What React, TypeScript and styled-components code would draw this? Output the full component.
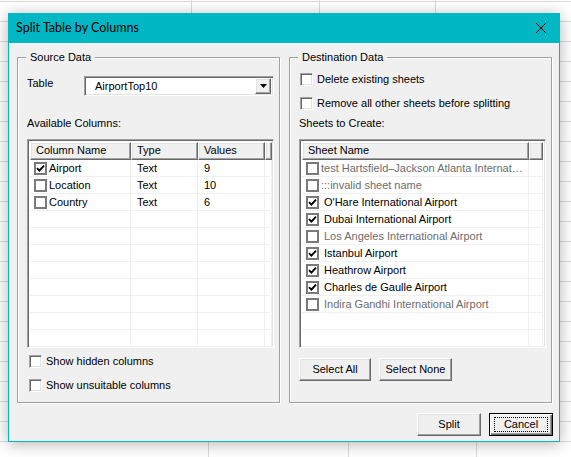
import React from "react";
import styled, { createGlobalStyle, css } from "styled-components";

const Global = createGlobalStyle`
  html, body { margin: 0; padding: 0; }
  body {
    width: 571px; height: 457px; overflow: hidden; background: #fff;
    font-family: "Liberation Sans", Arial, sans-serif; font-size: 11px; color: #000;
  }
  * { box-sizing: border-box; }
`;

const G = "#dadada";
const vline = (x: number, y: number, h: number) =>
  `linear-gradient(${G}, ${G}) ${x}px ${y}px / 1px ${h}px no-repeat`;

const Page = styled.div`
  width: 571px;
  height: 457px;
  padding: 13px 0 0 8px;
  background: ${vline(191, 0, 13)}, ${vline(319, 0, 13)}, ${vline(435, 0, 13)},
    ${vline(208, 441, 16)}, ${vline(348, 441, 16)}, ${vline(476, 441, 16)},
    repeating-linear-gradient(to bottom, ${G} 0 1px, transparent 1px 20px) 0 1px / 100% 100%,
    #fff;
`;

const Window = styled.div`
  width: 552px;
  height: 429px;
  background: #f0f0f0;
  border: 1px solid #00b7c3;
  border-top: none;
  box-shadow: 0 2px 14px rgba(0, 0, 0, 0.3);
  display: flex;
  flex-direction: column;
`;

const TitleBar = styled.div`
  height: 30px;
  margin: 0 -1px;
  background: #00b7c3;
  display: flex;
  align-items: center;
  padding: 0 10px 1px 8px;
  font-family: Lato, "Noto Sans", sans-serif;
  font-size: 12.5px;
  color: #000;
`;

const TitleText = styled.span`
  flex: 1;
`;

const CloseIcon = styled.svg`
  width: 12px;
  height: 12px;
  margin-right: 3px;
`;

const Client = styled.div`
  flex: 1;
  display: flex;
  flex-direction: column;
  padding: 14px 6px 0 8px;
`;

const Groups = styled.div`
  display: flex;
  gap: 9px;
`;

const GroupBox = styled.div`
  position: relative;
  width: 263px;
  height: 346px;
  border: 1px solid #a0a0a0;
  box-shadow: inset 1px 1px 0 #fff, 1px 1px 0 #fff;
  padding: 0 5px 0 9px;
  display: flex;
  flex-direction: column;
`;

const GroupTitle = styled.span`
  position: absolute;
  top: -7px;
  left: 8px;
  padding: 0 4px;
  line-height: 13px;
  background: #f0f0f0;
`;

const FieldRow = styled.div<{ $mt: number }>`
  display: flex;
  align-items: flex-start;
  margin-top: ${(p) => p.$mt}px;
`;

const FieldLabel = styled.span`
  width: 57px;
  line-height: 13px;
  padding-top: 1px;
`;

const sunken = css`
  border: 1px solid;
  border-color: #a0a0a0 #fff #fff #a0a0a0;
  box-shadow: inset 1px 1px 0 #696969, inset -1px -1px 0 #e3e3e3;
  background: #fff;
`;

const raised = css`
  background: #f0f0f0;
  border: 1px solid;
  border-color: #fff #696969 #696969 #fff;
  box-shadow: inset -1px -1px 0 #a0a0a0, inset 1px 1px 0 #e3e3e3;
`;

const Combo = styled.div`
  ${sunken};
  width: 190px;
  height: 20px;
  display: flex;
  align-items: center;
  padding: 2px 2px 2px 10px;
`;

const ComboText = styled.span`
  flex: 1;
  line-height: 13px;
`;

const ComboButton = styled.div`
  ${raised};
  width: 16px;
  height: 16px;
  display: flex;
  align-items: center;
  justify-content: center;
`;

const Caption = styled.div<{ $mt: number }>`
  line-height: 13px;
  margin-top: ${(p) => p.$mt}px;
`;

const ListView = styled.div<{ $mt: number }>`
  ${sunken};
  width: 247px;
  height: 209px;
  margin-top: ${(p) => p.$mt}px;
  padding: 2px;
  overflow: hidden;
`;

const HeaderRow = styled.div<{ $cols: string }>`
  display: grid;
  grid-template-columns: ${(p) => p.$cols};
  height: 18px;
`;

const HeaderCell = styled.div`
  ${raised};
  border-top-color: #fff;
  padding-left: 5px;
  line-height: 15px;
  white-space: nowrap;
  overflow: hidden;
`;

const Row = styled.div<{ $cols: string }>`
  display: grid;
  grid-template-columns: ${(p) => p.$cols};
  height: 17px;
  border-bottom: 1px solid #f0f0f0;
`;

const Cell = styled.div<{ $muted?: boolean }>`
  display: flex;
  align-items: center;
  padding-left: 6px;
  border-right: 1px solid #f0f0f0;
  white-space: nowrap;
  overflow: hidden;
  color: ${(p) => (p.$muted ? "#6d6d6d" : "#000")};
`;

const NameCell = styled(Cell)`
  padding-left: 4px;
`;

const ItemText = styled.span<{ $gap: number }>`
  margin-left: ${(p) => p.$gap}px;
  line-height: 16px;
`;

const ListCheck = styled.span`
  width: 13px;
  height: 13px;
  flex: none;
  border: 2px solid #7a7a7a;
  background: #fff;
  display: flex;
  align-items: center;
  justify-content: center;
`;

const CheckRow = styled.label<{ $mt: number; $ml?: number }>`
  display: flex;
  align-items: center;
  margin-top: ${(p) => p.$mt}px;
  margin-left: ${(p) => p.$ml ?? 0}px;
  height: 13px;
  line-height: 13px;
`;

const FormCheck = styled.span`
  ${sunken};
  width: 13px;
  height: 13px;
  flex: none;
  margin-right: 4px;
`;

const ButtonRow = styled.div<{ $mt: number; $end?: boolean }>`
  display: flex;
  gap: 8px;
  margin-top: ${(p) => p.$mt}px;
  justify-content: ${(p) => (p.$end ? "flex-end" : "flex-start")};
`;

const PushButton = styled.div<{ $w: number; $default?: boolean }>`
  position: relative;
  width: ${(p) => p.$w}px;
  height: 23px;
  display: flex;
  align-items: center;
  justify-content: center;
  padding-bottom: 1px;
  ${(p) =>
    p.$default
      ? css`
          background: #f0f0f0;
          border: 1px solid #000;
          box-shadow: inset 1px 1px 0 #fff, inset -1px -1px 0 #696969,
            inset -2px -2px 0 #a0a0a0;
          &::after {
            content: "";
            position: absolute;
            inset: 3px 4px 3px 4px;
            border: 1px dotted #000;
          }
        `
      : raised}
`;

const Check = () => (
  <svg width="9" height="9" viewBox="0 0 9 9">
    <polyline points="1,4.2 3.4,6.6 8,1.6" fill="none" stroke="#000" strokeWidth="1.9" />
  </svg>
);

const srcCols = "101px 67px 67px 1fr";
const dstCols = "227px 1fr";

const columns = [
  { name: "Airport", type: "Text", values: "9", checked: true },
  { name: "Location", type: "Text", values: "10", checked: false },
  { name: "Country", type: "Text", values: "6", checked: false },
];

const sheets = [
  { name: "test Hartsfield–Jackson Atlanta Internat…", checked: false, muted: true, invalid: true },
  { name: ":::invalid sheet name", checked: false, muted: true, invalid: true },
  { name: "O'Hare International Airport", checked: true },
  { name: "Dubai International Airport", checked: true },
  { name: "Los Angeles International Airport", checked: false, muted: true },
  { name: "Istanbul Airport", checked: true },
  { name: "Heathrow Airport", checked: true },
  { name: "Charles de Gaulle Airport", checked: true },
  { name: "Indira Gandhi International Airport", checked: false, muted: true },
];

export default function App() {
  const srcEmpty = Array.from({ length: 11 - columns.length });
  const dstEmpty = Array.from({ length: 11 - sheets.length });
  return (
    <>
      <Global />
      <Page>
        <Window>
          <TitleBar>
            <TitleText>Split Table by Columns</TitleText>
            <CloseIcon viewBox="0 0 12 12">
              <path d="M1 1 L11 11 M11 1 L1 11" stroke="#000" strokeWidth="1" fill="none" />
            </CloseIcon>
          </TitleBar>
          <Client>
            <Groups>
              <GroupBox>
                <GroupTitle>Source Data</GroupTitle>
                <FieldRow $mt={18}>
                  <FieldLabel>Table</FieldLabel>
                  <Combo>
                    <ComboText>AirportTop10</ComboText>
                    <ComboButton>
                      <svg width="7" height="4" viewBox="0 0 7 4">
                        <polygon points="0,0 7,0 3.5,4" fill="#000" />
                      </svg>
                    </ComboButton>
                  </Combo>
                </FieldRow>
                <Caption $mt={21}>Available Columns:</Caption>
                <ListView $mt={9}>
                  <HeaderRow $cols={srcCols}>
                    <HeaderCell>Column Name</HeaderCell>
                    <HeaderCell>Type</HeaderCell>
                    <HeaderCell>Values</HeaderCell>
                    <HeaderCell />
                  </HeaderRow>
                  {columns.map((c) => (
                    <Row key={c.name} $cols={srcCols}>
                      <NameCell>
                        <ListCheck>{c.checked && <Check />}</ListCheck>
                        <ItemText $gap={2}>{c.name}</ItemText>
                      </NameCell>
                      <Cell>{c.type}</Cell>
                      <Cell>{c.values}</Cell>
                      <Cell />
                    </Row>
                  ))}
                  {srcEmpty.map((_, i) => (
                    <Row key={i} $cols={srcCols}>
                      <Cell />
                      <Cell />
                      <Cell />
                      <Cell />
                    </Row>
                  ))}
                </ListView>
                <CheckRow $mt={7} $ml={2}>
                  <FormCheck />
                  Show hidden columns
                </CheckRow>
                <CheckRow $mt={11} $ml={2}>
                  <FormCheck />
                  Show unsuitable columns
                </CheckRow>
              </GroupBox>

              <GroupBox>
                <GroupTitle>Destination Data</GroupTitle>
                <CheckRow $mt={15} $ml={1}>
                  <FormCheck />
                  Delete existing sheets
                </CheckRow>
                <CheckRow $mt={11} $ml={1}>
                  <FormCheck />
                  Remove all other sheets before splitting
                </CheckRow>
                <Caption $mt={7}>Sheets to Create:</Caption>
                <ListView $mt={9}>
                  <HeaderRow $cols={dstCols}>
                    <HeaderCell>Sheet Name</HeaderCell>
                    <HeaderCell />
                  </HeaderRow>
                  {sheets.map((s) => (
                    <Row key={s.name} $cols={dstCols}>
                      <NameCell $muted={s.muted}>
                        <ListCheck>{s.checked && <Check />}</ListCheck>
                        <ItemText $gap={s.invalid ? 2 : 5}>{s.name}</ItemText>
                      </NameCell>
                      <Cell />
                    </Row>
                  ))}
                  {dstEmpty.map((_, i) => (
                    <Row key={i} $cols={dstCols}>
                      <Cell />
                      <Cell />
                    </Row>
                  ))}
                </ListView>
                <ButtonRow $mt={10}>
                  <PushButton $w={72}>Select All</PushButton>
                  <PushButton $w={73}>Select None</PushButton>
                </ButtonRow>
              </GroupBox>
            </Groups>
            <ButtonRow $mt={10} $end>
              <PushButton $w={64}>Split</PushButton>
              <PushButton $w={64} $default>
                Cancel
              </PushButton>
            </ButtonRow>
          </Client>
        </Window>
      </Page>
    </>
  );
}
